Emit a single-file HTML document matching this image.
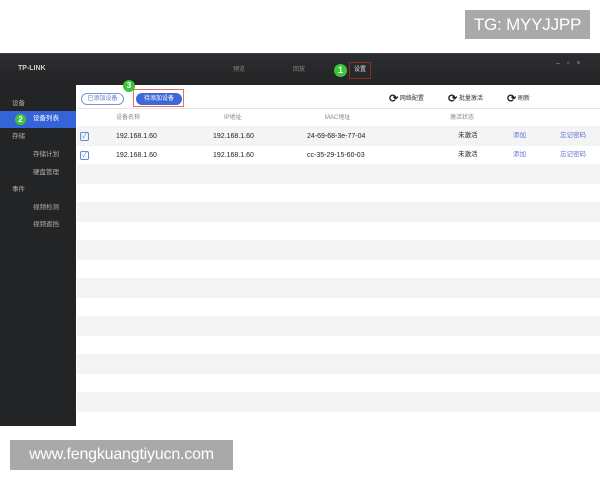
<!DOCTYPE html>
<html><head><meta charset="utf-8"><style>
*{margin:0;padding:0;box-sizing:border-box;line-height:1}
body{width:600px;height:480px;background:#fff;position:relative;overflow:hidden;font-family:"Liberation Sans","Noto Sans CJK SC",sans-serif;font-size:7px;color:#333}
.a{position:absolute}
.tb{left:0;top:53px;width:600px;height:32px;background:linear-gradient(#2c2d30,#232425);border-top:1px solid #3a4450}
.sb{left:0;top:85px;width:76px;height:341px;background:#232425}
.ct{left:76px;top:85px;width:524px;height:341px;background:#fff}
.stripe{left:77px;width:523px;height:20px;background:#f4f4f4}
.side{color:#b0b0b0;font-size:6.5px}
.circ{border-radius:50%;background:#3cc43c;color:#fff;font-weight:bold;text-align:center}
.wm{background:#a9a9a9;color:#fff;font-size:17px;text-align:center;letter-spacing:-0.2px}
.row{font-size:7px;color:#222}
.blue{color:#6070d0}
.cb{width:9px;height:9px;border:1px solid #5a8fd8;border-radius:2px;color:#5a8fd8;font-size:7px;line-height:7px;text-align:center}
.ic{font-size:11px;font-weight:bold;color:#222;vertical-align:-2px}
</style></head><body>
<div class="a wm" style="left:465px;top:10px;width:125px;height:29px;line-height:29px">TG: MYYJJPP</div>
<div class="a tb"></div>
<div class="a" style="left:18px;top:65px;color:#ccc;font-size:7px;font-weight:bold">TP-LINK</div>
<div class="a" style="left:233px;top:67px;color:#888;font-size:6px">预览</div>
<div class="a" style="left:293px;top:67px;color:#888;font-size:6px">回放</div>
<div class="a circ" style="left:334px;top:64px;width:13px;height:13px;line-height:13px;font-size:9px">1</div>
<div class="a" style="left:349px;top:62px;width:22px;height:17px;border:1px solid #8a2a2a;color:#ddd;font-size:6px;text-align:center;line-height:15px">设置</div>
<div class="a" style="left:556px;top:60px;color:#999;font-size:7px;letter-spacing:7px">–▫×</div>
<div class="a sb"></div>
<div class="a ct"></div>
<div class="a side" style="left:12px;top:101px">设备</div>
<div class="a" style="left:0;top:111px;width:76px;height:17px;background:#3564d8"></div>
<div class="a circ" style="left:15px;top:114px;width:11px;height:11px;line-height:11px;font-size:8px">2</div>
<div class="a" style="left:33px;top:116px;color:#fff;font-size:6.5px">设备列表</div>
<div class="a side" style="left:12px;top:134px">存储</div>
<div class="a side" style="left:33px;top:152px">存储计划</div>
<div class="a side" style="left:33px;top:170px">硬盘管理</div>
<div class="a side" style="left:12px;top:187px">事件</div>
<div class="a side" style="left:33px;top:205px">视频检测</div>
<div class="a side" style="left:33px;top:222px">视频遮挡</div>
<div class="a" style="left:81px;top:93px;width:43px;height:12px;border:1px solid #7e96d8;border-radius:7px;color:#5b74c9;font-size:6px;text-align:center;line-height:10px">已添加设备</div>
<div class="a" style="left:133px;top:89px;width:51px;height:18px;border:1px solid #e07070"></div>
<div class="a" style="left:136px;top:93px;width:46px;height:12px;background:#3e68d8;border-radius:7px;color:#fff;font-size:6px;text-align:center;line-height:12px">待添加设备</div>
<div class="a circ" style="left:123px;top:80px;width:12px;height:12px;line-height:12px;font-size:8px">3</div>
<div class="a" style="left:389px;top:94px;font-size:6px"><span class="ic">⟳</span> 网络配置</div>
<div class="a" style="left:448px;top:94px;font-size:6px"><span class="ic">⟳</span> 批量激活</div>
<div class="a" style="left:507px;top:94px;font-size:6px"><span class="ic">⟳</span> 刷新</div>
<div class="a" style="left:77px;top:108px;width:523px;height:1px;background:#e4e4e4"></div>
<div class="a" style="left:116px;top:115px;color:#888;font-size:6px">设备名称</div>
<div class="a" style="left:224px;top:115px;color:#888;font-size:6px">IP地址</div>
<div class="a" style="left:325px;top:115px;color:#888;font-size:6px">MAC地址</div>
<div class="a" style="left:450px;top:115px;color:#888;font-size:6px">激活状态</div>
<div class="a stripe" style="top:126px"></div>
<div class="a stripe" style="top:164px"></div>
<div class="a stripe" style="top:202px"></div>
<div class="a stripe" style="top:240px"></div>
<div class="a stripe" style="top:278px"></div>
<div class="a stripe" style="top:316px"></div>
<div class="a stripe" style="top:354px"></div>
<div class="a stripe" style="top:392px"></div>
<div class="a cb" style="left:80px;top:132px">✓</div>
<div class="a row" style="left:116px;top:133px">192.168.1.60</div>
<div class="a row" style="left:213px;top:133px">192.168.1.60</div>
<div class="a row" style="left:307px;top:133px">24-69-68-3e-77-04</div>
<div class="a row" style="left:458px;top:133px;font-size:6.5px">未激活</div>
<div class="a blue" style="left:513px;top:133px;font-size:6.5px">添加</div>
<div class="a blue" style="left:560px;top:133px;font-size:6.5px">忘记密码</div>
<div class="a cb" style="left:80px;top:151px">✓</div>
<div class="a row" style="left:116px;top:152px">192.168.1.60</div>
<div class="a row" style="left:213px;top:152px">192.168.1.60</div>
<div class="a row" style="left:307px;top:152px">cc-35-29-15-60-03</div>
<div class="a row" style="left:458px;top:152px;font-size:6.5px">未激活</div>
<div class="a blue" style="left:513px;top:152px;font-size:6.5px">添加</div>
<div class="a blue" style="left:560px;top:152px;font-size:6.5px">忘记密码</div>
<div class="a wm" style="left:10px;top:440px;width:223px;height:30px;line-height:30px;font-size:16px">www.fengkuangtiyucn.com</div>
</body></html>
